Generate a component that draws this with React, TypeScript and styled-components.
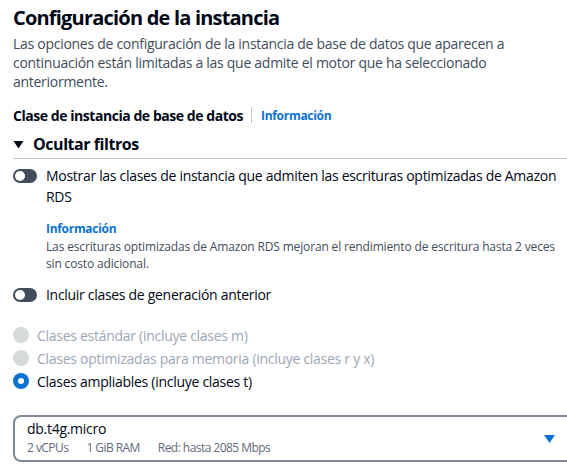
import React from "react";
import styled, { createGlobalStyle } from "styled-components";

const Global = createGlobalStyle`
  html, body { margin: 0; padding: 0; background: #ffffff; overflow: hidden; }
  body { font-family: "Open Sans", "Noto Sans", Arial, sans-serif; color: #000716; }
  * { box-sizing: border-box; }
`;

const Page = styled.div`
  width: 600px;
  padding: 4px 0 0 13px;
  display: flex;
  flex-direction: column;
`;

const Title = styled.h2`
  margin: 0;
  font-size: 20px;
  line-height: 28px;
  font-weight: 700;
  color: #000716;
  letter-spacing: -0.8px;
`;

const Description = styled.p`
  margin: 2px 0 0;
  font-size: 14px;
  line-height: 19px;
  color: #414d5c;
  letter-spacing: -0.28px;
`;

const Line = styled.span`
  display: block;
  white-space: nowrap;
`;

const LabelRow = styled.div`
  display: flex;
  align-items: center;
  margin-top: 14px;
  height: 20px;
`;

const FieldLabel = styled.span`
  font-size: 14px;
  font-weight: 700;
  color: #000716;
  letter-spacing: -0.45px;
`;

const Sep = styled.span`
  width: 1px;
  height: 16px;
  background: #c6c6cd;
  margin: 0 9px 0 8px;
`;

const InfoLink = styled.a`
  font-size: 12px;
  font-weight: 700;
  color: #0972d3;
  text-decoration: none;
  letter-spacing: -0.3px;
`;

const Expander = styled.div`
  display: flex;
  align-items: center;
  gap: 9px;
  margin-top: 8px;
  height: 22px;
  font-size: 16px;
  font-weight: 700;
  color: #000716;
  letter-spacing: -0.45px;
`;

const Divider = styled.div`
  height: 1px;
  background: #c6c6cd;
  margin-top: 3px;
`;

const ToggleRow = styled.div<{ $top: number }>`
  display: flex;
  align-items: flex-start;
  gap: 9px;
  margin-top: ${(p) => p.$top}px;
`;

const Toggle = styled.span`
  flex: none;
  width: 24px;
  height: 14px;
  margin-top: 4px;
  border-radius: 7px;
  background: #414d5c;
  position: relative;
  &::after {
    content: "";
    position: absolute;
    left: 2px;
    top: 2px;
    width: 10px;
    height: 10px;
    border-radius: 50%;
    background: #ffffff;
  }
`;

const ToggleText = styled.div`
  font-size: 14px;
  line-height: 21px;
  color: #000716;
  letter-spacing: -0.3px;
`;

const InfoBlock = styled.div`
  display: flex;
  flex-direction: column;
  margin: 13px 0 0 33px;
`;

const SmallInfo = styled(InfoLink)`
  line-height: 18px;
`;

const SmallText = styled.div`
  font-size: 12px;
  line-height: 17px;
  color: #414d5c;
  letter-spacing: -0.15px;
`;

const RadioGroup = styled.div`
  display: flex;
  flex-direction: column;
  gap: 3px;
  margin-top: 20px;
`;

const RadioRow = styled.div<{ $disabled?: boolean }>`
  display: flex;
  align-items: center;
  gap: 8px;
  height: 20px;
  font-size: 14px;
  letter-spacing: -0.28px;
  color: ${(p) => (p.$disabled ? "#9ba7b6" : "#000716")};
`;

const Radio = styled.span<{ $checked?: boolean; $disabled?: boolean }>`
  flex: none;
  width: 16px;
  height: 16px;
  border-radius: 50%;
  background: ${(p) => (p.$disabled ? "#d5dbdb" : p.$checked ? "#0972d3" : "#fff")};
  position: relative;
  ${(p) =>
    p.$checked
      ? `&::after { content: ""; position: absolute; left: 5px; top: 5px; width: 6px; height: 6px; border-radius: 50%; background: #fff; }`
      : ""}
`;

const Select = styled.div`
  margin-top: 24px;
  width: 575px;
  height: 47px;
  border: 2px solid #7d8998;
  border-radius: 8px;
  display: flex;
  align-items: center;
  justify-content: space-between;
  padding: 0 10px 2px 12px;
`;

const SelectBody = styled.div`
  display: flex;
  flex-direction: column;
`;

const SelectValue = styled.div`
  font-size: 14px;
  line-height: 20px;
  color: #000716;
  letter-spacing: -0.28px;
`;

const Tags = styled.div`
  display: flex;
  gap: 18px;
  font-size: 12px;
  line-height: 18px;
  color: #5f6b7a;
  letter-spacing: -0.55px;
`;

const Arrow = styled.svg`
  margin-right: 21px;
  margin-top: 2px;
`;

export default function App() {
  return (
    <>
      <Global />
      <Page>
        <Title>Configuración de la instancia</Title>
        <Description>
          <Line>Las opciones de configuración de la instancia de base de datos que aparecen a</Line>
          <Line>continuación están limitadas a las que admite el motor que ha seleccionado</Line>
          <Line>anteriormente.</Line>
        </Description>
        <LabelRow>
          <FieldLabel>Clase de instancia de base de datos</FieldLabel>
          <Sep />
          <InfoLink>Información</InfoLink>
        </LabelRow>
        <Expander>
          <svg width="11" height="9" viewBox="0 0 11 9">
            <path d="M0.5 1 L10.5 1 L5.5 8.5 Z" fill="#000716" />
          </svg>
          Ocultar filtros
        </Expander>
        <Divider />
        <ToggleRow $top={6}>
          <Toggle />
          <ToggleText>
            <Line>Mostrar las clases de instancia que admiten las escrituras optimizadas de Amazon</Line>
            <Line>RDS</Line>
          </ToggleText>
        </ToggleRow>
        <InfoBlock>
          <SmallInfo>Información</SmallInfo>
          <SmallText>
            <Line>Las escrituras optimizadas de Amazon RDS mejoran el rendimiento de escritura hasta 2 veces</Line>
            <Line>sin costo adicional.</Line>
          </SmallText>
        </InfoBlock>
        <ToggleRow $top={12}>
          <Toggle />
          <ToggleText>Incluir clases de generación anterior</ToggleText>
        </ToggleRow>
        <RadioGroup>
          <RadioRow $disabled>
            <Radio $disabled />
            Clases estándar (incluye clases m)
          </RadioRow>
          <RadioRow $disabled>
            <Radio $disabled />
            Clases optimizadas para memoria (incluye clases r y x)
          </RadioRow>
          <RadioRow>
            <Radio $checked />
            Clases ampliables (incluye clases t)
          </RadioRow>
        </RadioGroup>
        <Select>
          <SelectBody>
            <SelectValue>db.t4g.micro</SelectValue>
            <Tags>
              <span>2 vCPUs</span>
              <span>1 GiB RAM</span>
              <span>Red: hasta 2085 Mbps</span>
            </Tags>
          </SelectBody>
          <Arrow width="11" height="8" viewBox="0 0 11 8">
            <path d="M0 0 L11 0 L5.5 8 Z" fill="#0972d3" />
          </Arrow>
        </Select>
      </Page>
    </>
  );
}
